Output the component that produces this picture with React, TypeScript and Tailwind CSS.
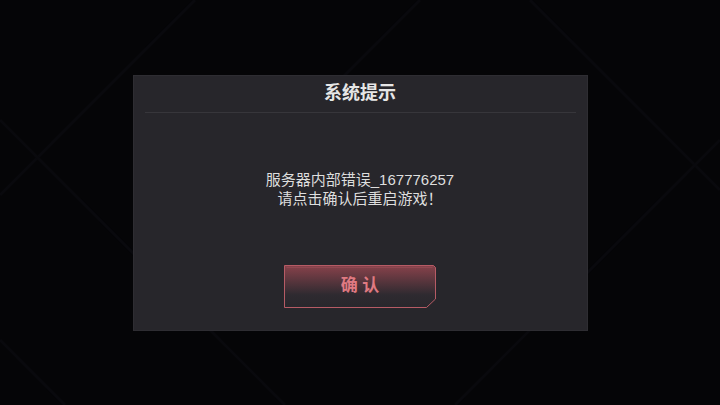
const FONT = '"Liberation Sans", "Noto Sans CJK SC", sans-serif'

const Backdrop = () => (
  <svg className="absolute inset-0 h-full w-full" viewBox="0 0 720 405" preserveAspectRatio="none">
    <rect width="720" height="405" fill="#050507" />
    <g stroke="#09090d" strokeWidth="3" fill="none">
      <path d="M195 0 L0 195" />
      <path d="M0 120 L285 405" />
      <path d="M530 0 L720 190" />
      <path d="M720 140 L455 405" />
      <path d="M0 340 L65 405" />
      <path d="M420 0 L135 285" />
    </g>
  </svg>
)

const ConfirmButton = () => (
  <button className="relative flex h-[43px] w-[152px] items-center justify-center">
    <svg className="absolute inset-0 h-full w-full" viewBox="0 0 152 43">
      <defs>
        <linearGradient id="btn" x1="0" y1="0" x2="0" y2="1">
          <stop offset="0" stopColor="#88424b" />
          <stop offset="0.7" stopColor="#2e2a30" />
          <stop offset="1" stopColor="#28272c" />
        </linearGradient>
      </defs>
      <path
        d="M0.5 0.5 H149.5 L151.5 2.5 V34 L142.5 42.5 H0.5 Z"
        fill="url(#btn)"
        stroke="#b65b65"
        strokeWidth="1"
      />
      <path d="M2.5 2.5 H148.5" stroke="#a0505a" strokeOpacity="0.5" />
    </svg>
    <span
      className="relative whitespace-pre text-[17px] font-bold text-[#e07a82]"
      style={{ fontFamily: FONT }}
    >
      确 认
    </span>
  </button>
)

export default function App() {
  return (
    <div className="relative flex h-[405px] w-[720px] items-center justify-center overflow-hidden bg-[#050507]">
      <Backdrop />
      <div
        className="relative flex h-[256px] w-[455px] flex-col border border-[#2e2d32] bg-[#27262b]"
        style={{ fontFamily: FONT }}
      >
        <div className="mx-[11px] flex h-[37px] items-center justify-center border-b border-[#37363b]">
          <span className="text-[18px] font-bold text-[#e6e6e6]">系统提示</span>
        </div>
        <div className="mt-[57px] flex flex-col items-center text-[15px] leading-[19px] text-[#dedede]">
          <span>服务器内部错误_167776257</span>
          <span>请点击确认后重启游戏！</span>
        </div>
        <div className="mt-[57px] flex justify-center">
          <ConfirmButton />
        </div>
      </div>
    </div>
  )
}
